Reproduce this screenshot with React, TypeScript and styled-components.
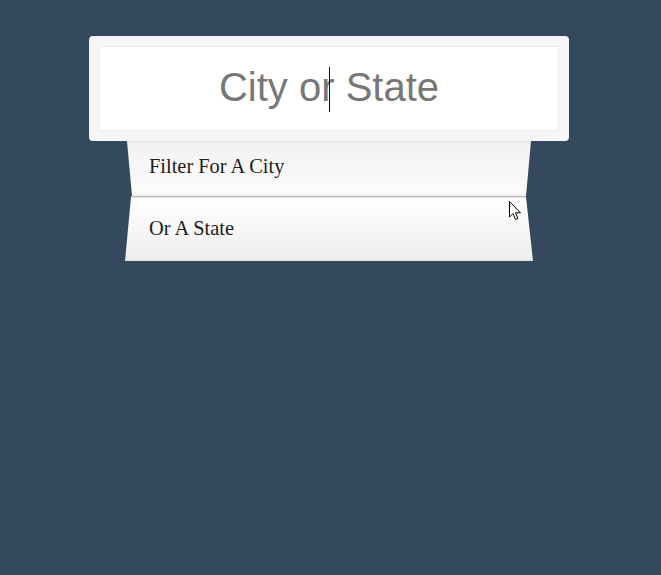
import React from "react";
import styled, { createGlobalStyle } from "styled-components";

const Global = createGlobalStyle`
  html, body { margin: 0; padding: 0; background: #34495e; }
  body { width: 661px; height: 575px; overflow: hidden; }
`;

const Page = styled.div`
  display: flex;
  flex-direction: column;
  align-items: flex-start;
  padding: 36px 0 0 89px;
  position: relative;
`;

const SearchCard = styled.div`
  box-sizing: border-box;
  width: 480px;
  padding: 10px;
  background: #f6f6f6;
  border-radius: 4px;
  position: relative;
  z-index: 2;
`;

const SearchField = styled.div`
  box-sizing: border-box;
  position: relative;
  height: 85px;
  background: #fff;
  border: 1px solid #ececec;
  display: flex;
  align-items: center;
  justify-content: center;
  font-family: "Liberation Sans", Arial, sans-serif;
  font-size: 40px;
  color: #777;
  padding-bottom: 2px;
`;

const Caret = styled.span`
  position: absolute;
  left: 229px;
  top: 20px;
  width: 1px;
  height: 45px;
  background: #111;
`;

const List = styled.div`
  display: flex;
  flex-direction: column;
  width: 408px;
  margin-left: 36px;
`;

const Item = styled.div<{ $clip: string; $h: number; $bg: string; $shift: number }>`
  box-sizing: border-box;
  height: ${(p) => p.$h}px;
  padding: 0 0 ${(p) => p.$shift}px 24px;
  display: flex;
  align-items: center;
  font-family: "Liberation Serif", "Times New Roman", serif;
  font-size: 20.4px;
  color: #1c1c1c;
  background: ${(p) => p.$bg};
  clip-path: ${(p) => p.$clip};
`;

const Divider = styled.div`
  height: 1px;
  background: #b9b9b9;
  margin: 0 7px 0 6px;
`;

const Pointer = styled.svg`
  position: absolute;
  left: 509px;
  top: 201px;
`;

export default function App() {
  return (
    <>
      <Global />
      <Page>
        <SearchCard>
          <SearchField>
            City or State
            <Caret />
          </SearchField>
        </SearchCard>
        <List>
          <Item
            $h={55}
            $shift={5}
            $bg="linear-gradient(to bottom, #e6e6e6 0, #f2f2f2 3px, #f7f7f7 50%, #fbfbfb 92%, #f0f0f0 100%)"
            $clip="polygon(2px 0, 406px 0, 401px 100%, 7px 100%)"
          >
            Filter For A City
          </Item>
          <Divider />
          <Item
            $h={64}
            $shift={1}
            $bg="linear-gradient(to bottom, #e2e2e2 0, #ffffff 2px, #f9f9f9 40%, #ededed 97%, #dcdcdc 100%)"
            $clip="polygon(6px 0, 401px 0, 408px 100%, 0 100%)"
          >
            Or A State
          </Item>
        </List>
        <Pointer width="13" height="21" viewBox="0 0 13 21">
          <path
            d="M0.5 0.5 L0.5 16 L4 12.5 L6.5 18.5 L9 17.5 L6.5 11.8 L11.5 11.8 Z"
            fill="#fff"
            stroke="#000"
            strokeWidth="1"
            strokeLinejoin="round"
          />
        </Pointer>
      </Page>
    </>
  );
}
